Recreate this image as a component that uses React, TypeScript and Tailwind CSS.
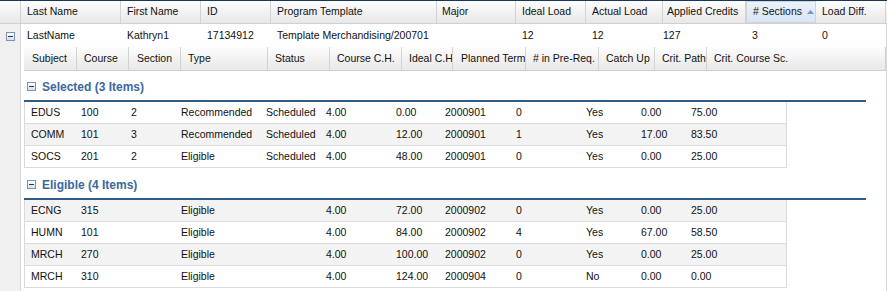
import React from 'react'

type Col = { label: string; w: string; pad?: string; sorted?: boolean }

const headCols: Col[] = [
  { label: 'Last Name', w: 'w-[100px]' },
  { label: 'First Name', w: 'w-[80px]' },
  { label: 'ID', w: 'w-[70px]' },
  { label: 'Program Template', w: 'w-[166px]' },
  { label: 'Major', w: 'w-[79px]', pad: 'pl-[5px]' },
  { label: 'Ideal Load', w: 'w-[70px]' },
  { label: 'Actual Load', w: 'w-[77px]' },
  { label: 'Applied Credits', w: 'w-[83px]', pad: 'pl-[4px]' },
  { label: '# Sections', w: 'w-[70px]', sorted: true },
  { label: 'Load Diff.', w: 'w-[70px]' },
]

const studentRow = [
  'LastName',
  'Kathryn1',
  '17134912',
  'Template Merchandising/200701',
  '',
  '12',
  '12',
  '127',
  '3',
  '0',
]

const subCols: Col[] = [
  { label: 'Subject', w: 'w-[53px]', pad: 'pl-[8px]' },
  { label: 'Course', w: 'w-[52px]' },
  { label: 'Section', w: 'w-[52px]', pad: 'pl-[8px]' },
  { label: 'Type', w: 'w-[87px]' },
  { label: 'Status', w: 'w-[62px]' },
  { label: 'Course C.H.', w: 'w-[72px]' },
  { label: 'Ideal C.H', w: 'w-[51px]' },
  { label: 'Planned Term', w: 'w-[73px]', pad: 'pl-[8px]' },
  { label: '# in Pre-Req.', w: 'w-[73px]' },
  { label: 'Catch Up', w: 'w-[56px]' },
  { label: 'Crit. Path', w: 'w-[52px]' },
  { label: 'Crit. Course Sc.', w: 'flex-1' },
]

// data cells are a bit narrower than the header cells above them
const cellWidths = [
  'w-[49px] pl-[6px]',
  'w-[50px] pl-[7px]',
  'w-[50px] pl-[7px]',
  'w-[85px] pl-[7px]',
  'w-[60px] pl-[7px]',
  'w-[70px] pl-[7px]',
  'w-[49px] pl-[7px]',
  'w-[71px] pl-[7px]',
  'w-[70px] pl-[7px]',
  'w-[55px] pl-[7px]',
  'w-[50px] pl-[7px]',
  'flex-1 pl-[7px]',
]

const groups = [
  {
    title: 'Selected (3 Items)',
    rows: [
      ['EDUS', '100', '2', 'Recommended', 'Scheduled', '4.00', '0.00', '2000901', '0', 'Yes', '0.00', '75.00'],
      ['COMM', '101', '3', 'Recommended', 'Scheduled', '4.00', '12.00', '2000901', '1', 'Yes', '17.00', '83.50'],
      ['SOCS', '201', '2', 'Eligible', 'Scheduled', '4.00', '48.00', '2000901', '0', 'Yes', '0.00', '25.00'],
    ],
  },
  {
    title: 'Eligible (4 Items)',
    rows: [
      ['ECNG', '315', '', 'Eligible', '', '4.00', '72.00', '2000902', '0', 'Yes', '0.00', '25.00'],
      ['HUMN', '101', '', 'Eligible', '', '4.00', '84.00', '2000902', '4', 'Yes', '67.00', '58.50'],
      ['MRCH', '270', '', 'Eligible', '', '4.00', '100.00', '2000902', '0', 'Yes', '0.00', '25.00'],
      ['MRCH', '310', '', 'Eligible', '', '4.00', '124.00', '2000904', '0', 'No', '0.00', '0.00'],
    ],
  },
]

const Collapse = () => (
  <span className="flex h-[9px] w-[9px] flex-shrink-0 items-center justify-center border border-[#7f93b0] bg-linear-to-b from-white to-[#d6e0ec]">
    <span className="h-px w-[5px] bg-[#1e3a63]" />
  </span>
)

const headCell = 'flex h-full items-center overflow-hidden whitespace-nowrap border-r border-[#d3d3d3]'

const App = () => {
  let rowIndex = 0

  return (
    <div
      className="h-[291px] w-[887px] overflow-hidden border-t border-[#17375c] bg-white text-[10.5px] text-[#111]"
      style={{ fontFamily: '"Liberation Sans", Arial, sans-serif' }}
    >
      {/* column headers */}
      <div className="flex h-[23px] border-b border-[#d0d0d0] bg-linear-to-b from-[#fdfdfd] to-[#e8e8e8]">
        <div className={`${headCell} w-[21px]`} />
        {headCols.map((c) => (
          <div
            key={c.label}
            className={`${headCell} ${c.w} ${c.pad ?? 'pl-[6px]'} ${
              c.sorted ? 'border border-[#a9c6e6] bg-linear-to-b from-[#eaf2fb] to-[#d7e5f5]' : ''
            }`}
          >
            <span>{c.label}</span>
            {c.sorted && (
              <svg width="7" height="4" viewBox="0 0 7 4" className="ml-[5px]">
                <path d="M0 4 L3.5 0 L7 4 Z" fill="#7798c2" />
              </svg>
            )}
          </div>
        ))}
      </div>

      <div className="flex border-r border-[#d6d6d6]">
        {/* expander column */}
        <div className="flex h-[268px] w-[21px] flex-shrink-0 justify-center border-r border-[#d8d8d8] bg-[#f0f0f0] pt-[8px]">
          <Collapse />
        </div>

        <div className="flex-1">
          {/* student row */}
          <div className="flex h-[23px]">
            {headCols.map((c, i) => (
              <div
                key={c.label}
                className={`flex items-center overflow-hidden whitespace-nowrap ${c.w} ${
                  i === 7 ? 'pl-0' : c.pad ?? 'pl-[6px]'
                } ${i === 0 ? 'w-[99px]' : ''}`}
              >
                {studentRow[i]}
              </div>
            ))}
          </div>

          {/* detail grid */}
          <div className="pl-[3px]">
            <div className="flex h-[24px] border-b border-[#d0d0d0] bg-linear-to-b from-[#fdfdfd] to-[#e8e8e8]">
              {subCols.map((c) => (
                <div key={c.label} className={`${headCell} ${c.w} ${c.pad ?? 'pl-[7px]'}`}>
                  {c.label}
                </div>
              ))}
            </div>

            {groups.map((g) => (
              <div key={g.title}>
                <div className="flex h-[31px] w-[842px] items-center gap-[6px] border-b-2 border-[#2f5c8a] pl-[3px] pt-[2px]">
                  <Collapse />
                  <span className="text-[12px] font-bold text-[#3a68a0]">{g.title}</span>
                </div>
                <div className="mb-px w-[763px] border-l border-r border-[#dadada]">
                  {g.rows.map((r) => {
                    const shaded = rowIndex++ % 2 === 1
                    return (
                      <div
                        key={r.join('-')}
                        className={`flex h-[22px] border-b border-[#dcdcdc] ${shaded ? 'bg-[#f3f3f3]' : 'bg-white'}`}
                      >
                        {r.map((v, i) => (
                          <div key={i} className={`flex items-center overflow-hidden whitespace-nowrap ${cellWidths[i]}`}>
                            {v}
                          </div>
                        ))}
                      </div>
                    )
                  })}
                </div>
              </div>
            ))}
          </div>
        </div>
      </div>
    </div>
  )
}

export default App
